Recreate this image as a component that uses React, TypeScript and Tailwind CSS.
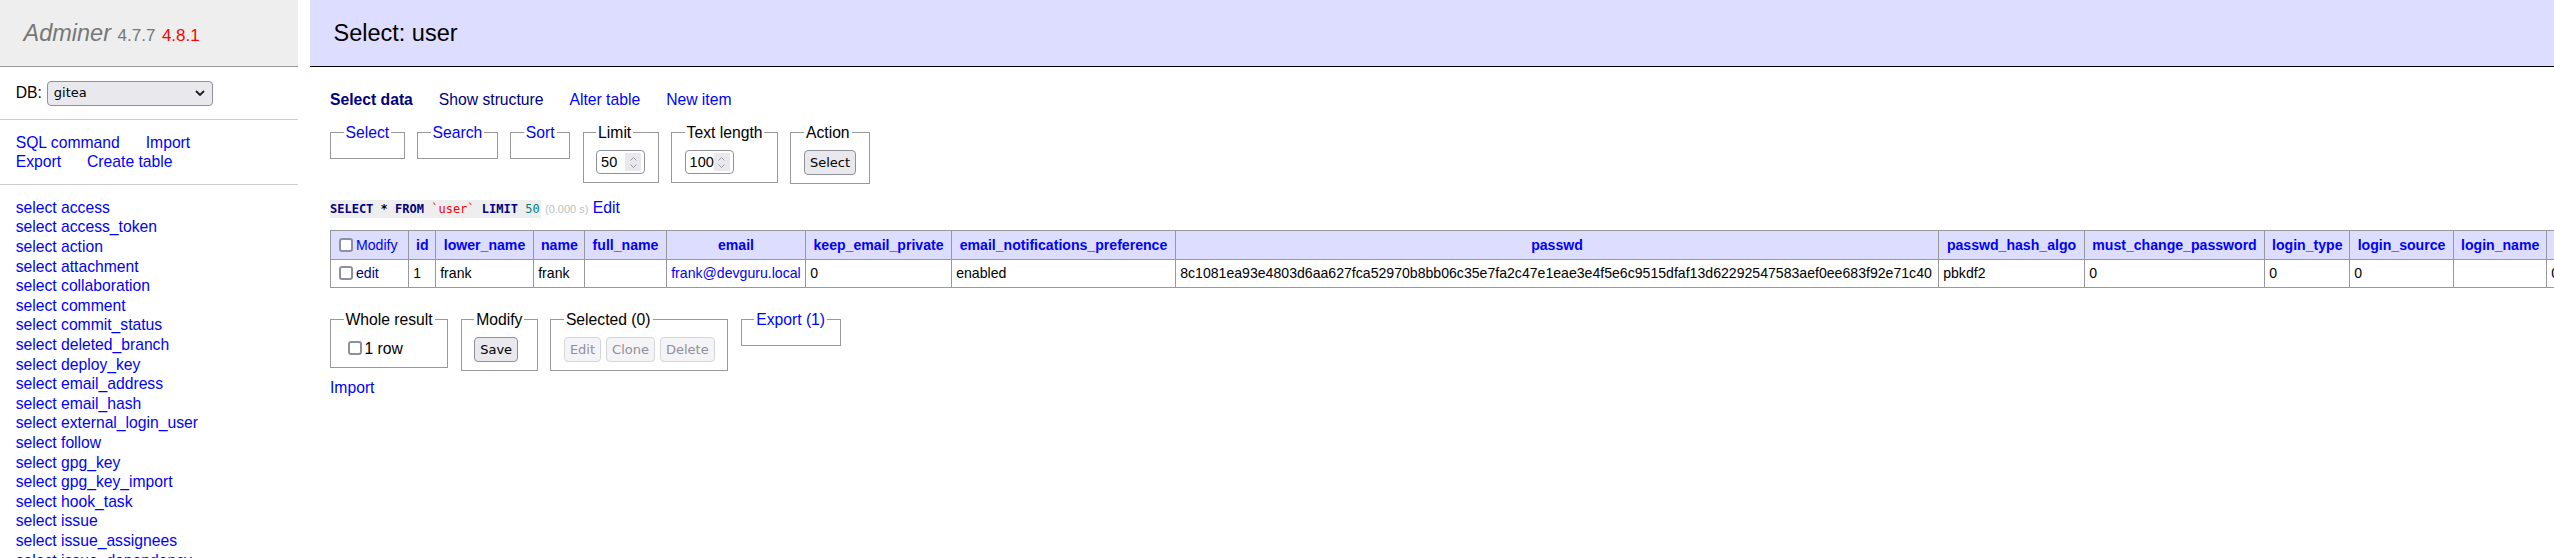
import React from "react";

/* ---------- data ---------- */

const tables = [
  "access",
  "access_token",
  "action",
  "attachment",
  "collaboration",
  "comment",
  "commit_status",
  "deleted_branch",
  "deploy_key",
  "email_address",
  "email_hash",
  "external_login_user",
  "follow",
  "gpg_key",
  "gpg_key_import",
  "hook_task",
  "issue",
  "issue_assignees",
  "issue_dependency",
  "issue_index",
];

interface Column {
  name: string;
  width: string;
  value: string;
  link?: boolean;
}

const columns: Column[] = [
  { name: "id", width: "w-[27px]", value: "1" },
  { name: "lower_name", width: "w-[98px]", value: "frank" },
  { name: "name", width: "w-[51px]", value: "frank" },
  { name: "full_name", width: "w-[82px]", value: "" },
  { name: "email", width: "w-[139px]", value: "frank@devguru.local", link: true },
  { name: "keep_email_private", width: "w-[146px]", value: "0" },
  { name: "email_notifications_preference", width: "w-[224px]", value: "enabled" },
  {
    name: "passwd",
    width: "w-[763px]",
    value:
      "8c1081ea93e4803d6aa627fca52970b8bb06c35e7fa2c47e1eae3e4f5e6c9515dfaf13d62292547583aef0ee683f92e71c40",
  },
  { name: "passwd_hash_algo", width: "w-[146px]", value: "pbkdf2" },
  { name: "must_change_password", width: "w-[180px]", value: "0" },
  { name: "login_type", width: "w-[85px]", value: "0" },
  { name: "login_source", width: "w-[104px]", value: "0" },
  { name: "login_name", width: "w-[93px]", value: "" },
  { name: "type", width: "w-[60px]", value: "0" },
  { name: "location", width: "w-[90px]", value: "" },
  { name: "website", width: "w-[90px]", value: "" },
];

/* ---------- small form controls ---------- */

function Check() {
  return (
    <span className="ml-[4px] mr-[3px] inline-block h-[14px] w-[14px] shrink-0 rounded-[3px] border-2 border-[#8f8f9d] bg-white align-[-2px]" />
  );
}

function Btn({ children, disabled }: { children: React.ReactNode; disabled?: boolean }) {
  return (
    <span
      className={`inline-flex h-[25px] items-center rounded-[4px] border px-[5px] font-['DejaVu_Sans',sans-serif] text-[13px] ${
        disabled
          ? "border-[#d5d5dc] bg-[#f4f4f6] text-[#8f8f9d]"
          : "border-[#8f8f9d] bg-[#e9e9ed] text-black"
      }`}
    >
      {children}
    </span>
  );
}

function NumBox({ value }: { value: string }) {
  return (
    <div className="flex h-[24px] w-[49px] items-stretch overflow-hidden rounded-[4px] border border-[#8f8f9d] bg-white">
      <span className="flex-1 overflow-hidden whitespace-nowrap pl-[4px] text-[14.5px] leading-[22px]">
        {value}
      </span>
      <span className="my-[2px] mr-[3px] flex w-[16px] flex-col items-center justify-center gap-[3px] bg-[#e9e9ed]">
        <svg width="7" height="4" viewBox="0 0 7 4">
          <polyline points="0.5,3.5 3.5,0.5 6.5,3.5" fill="none" stroke="#9a9aa6" strokeWidth="1" />
        </svg>
        <svg width="7" height="4" viewBox="0 0 7 4">
          <polyline points="0.5,0.5 3.5,3.5 6.5,0.5" fill="none" stroke="#9a9aa6" strokeWidth="1" />
        </svg>
      </span>
    </div>
  );
}

function DbSelect() {
  return (
    <div className="ml-[5px] flex h-[25px] w-[166px] items-center justify-between rounded-[4px] border border-[#8f8f9d] bg-[#e9e9ed] pl-[6px] pr-[7px]">
      <span className="font-['DejaVu_Sans',sans-serif] text-[13px]">gitea</span>
      <svg width="10" height="6" viewBox="0 0 10 6">
        <polyline points="1,1 5,5 9,1" fill="none" stroke="#1c1b22" strokeWidth="1.8" />
      </svg>
    </div>
  );
}

function Field({
  legend,
  link,
  children,
}: {
  legend: string;
  link?: boolean;
  children?: React.ReactNode;
}) {
  return (
    <fieldset className="m-0 min-w-0 border border-[#999] px-[12.5px] pb-[7.85px] pt-[7.85px]">
      <legend className={`px-[2px] leading-[19.6px] ${link ? "text-[#00f]" : "text-black"}`}>
        {legend}
      </legend>
      {children}
    </fieldset>
  );
}

/* ---------- page ---------- */

export default function App() {
  return (
    <div className="h-[558px] w-[2554px] overflow-hidden bg-white font-['Liberation_Sans',Arial,sans-serif] text-[15.7px] leading-[19.6px] text-black">
      <div className="flex">
        {/* MENU */}
        <aside className="w-[298px] shrink-0">
          <h1 className="h-[67px] whitespace-nowrap border-b border-[#999] bg-[#eee] pl-[23.5px] pt-[18.8px] text-[23.5px] leading-[29.4px] text-[#777]">
            <a className="italic text-[#777]">Adminer</a>{" "}
            <span className="text-[17px] text-[#777]">4.7.7</span>{" "}
            <a className="text-[17px] text-[#f00]">4.8.1</a>
          </h1>

          <div className="flex h-[53px] items-center border-b border-[#ccc] px-[15.7px]">
            <span>DB:</span>
            <DbSelect />
          </div>

          <div className="border-b border-[#ccc] px-[15.7px] py-[12.56px] text-[#00f]">
            <div className="flex gap-[26px]">
              <a>SQL command</a>
              <a>Import</a>
            </div>
            <div className="flex gap-[26px]">
              <a>Export</a>
              <a>Create table</a>
            </div>
          </div>

          <ul className="px-[15.7px] pt-[12.56px] text-[#00f]">
            {tables.map((t) => (
              <li key={t} className="whitespace-nowrap">
                <a>select</a> <a>{t}</a>
              </li>
            ))}
          </ul>
        </aside>

        {/* CONTENT */}
        <main className="ml-[12px] flex-1">
          <h2 className="h-[67px] whitespace-nowrap border-b border-black bg-[#ddf] pl-[23.5px] pt-[18.8px] text-[23.5px] leading-[29.4px]">
            Select: user
          </h2>

          <div className="pl-[20px]">
            <p className="mt-[23.3px] flex gap-[26px] whitespace-nowrap">
              <a className="font-bold text-[#000080]">Select data</a>
              <a className="text-[#000080]">Show structure</a>
              <a className="text-[#00f]">Alter table</a>
              <a className="text-[#00f]">New item</a>
            </p>

            {/* SEARCH FORM */}
            <div className="mt-[12.8px] flex items-start gap-[12.5px]">
              <Field legend="Select" link />
              <Field legend="Search" link />
              <Field legend="Sort" link />
              <Field legend="Limit">
                <NumBox value="50" />
              </Field>
              <Field legend="Text length">
                <NumBox value="100" />
              </Field>
              <Field legend="Action">
                <Btn>Select</Btn>
              </Field>
            </div>

            {/* QUERY */}
            <p className="mt-[14px] whitespace-nowrap">
              <code className="inline-block h-[18px] bg-[#eee] pr-[1px] font-['DejaVu_Sans_Mono',monospace] text-[12px] leading-[18px]">
                <span className="font-bold text-[#000080]">SELECT</span>{" "}
                <span className="font-bold">*</span>{" "}
                <span className="font-bold text-[#000080]">FROM</span>{" "}
                <span className="text-[#f00]">`user`</span>{" "}
                <span className="font-bold text-[#000080]">LIMIT</span>{" "}
                <span className="text-[#008080]">50</span>
              </code>{" "}
              <span className="text-[11px] text-[#c0c0c0]">(0.000 s)</span>{" "}
              <a className="text-[#00f]">Edit</a>
            </p>

            {/* RESULT TABLE */}
            <table className="mt-[10.8px] w-[2456px] table-fixed border-collapse text-[14.1px] leading-[17.6px]">
              <colgroup>
                <col className="w-[78px]" />
                {columns.map((c) => (
                  <col key={c.name} className={c.width} />
                ))}
              </colgroup>
              <thead>
                <tr className="h-[29px] bg-[#ddf]">
                  <td className="whitespace-nowrap border border-[#999] px-[4px] text-left">
                    <Check />
                    <a className="text-[#00f]">Modify</a>
                  </td>
                  {columns.map((c) => (
                    <th
                      key={c.name}
                      className="whitespace-nowrap border border-[#999] px-[7px] text-center font-bold text-[#00f]"
                    >
                      <a>{c.name}</a>
                    </th>
                  ))}
                </tr>
              </thead>
              <tbody>
                <tr className="h-[28px]">
                  <td className="whitespace-nowrap border border-[#999] px-[4px]">
                    <Check />
                    <a className="text-[#000080]">edit</a>
                  </td>
                  {columns.map((c) => (
                    <td
                      key={c.name}
                      className={`whitespace-nowrap border border-[#999] px-[4.2px] ${
                        c.link ? "text-[#00f]" : "text-black"
                      }`}
                    >
                      {c.value}
                    </td>
                  ))}
                </tr>
              </tbody>
            </table>

            {/* RESULT ACTIONS */}
            <div className="mt-[21.5px] flex items-start gap-[12.5px]">
              <Field legend="Whole result">
                <div className="flex h-[22px] items-center">
                  <Check />
                  <span>1 row</span>
                </div>
              </Field>
              <Field legend="Modify">
                <Btn>Save</Btn>
              </Field>
              <Field legend="Selected (0)">
                <div className="flex gap-[5px]">
                  <Btn disabled>Edit</Btn>
                  <Btn disabled>Clone</Btn>
                  <Btn disabled>Delete</Btn>
                </div>
              </Field>
              <Field legend="Export (1)" link />
            </div>

            <p className="mt-[6.9px]">
              <a className="text-[#00f]">Import</a>
            </p>
          </div>
        </main>
      </div>
    </div>
  );
}
